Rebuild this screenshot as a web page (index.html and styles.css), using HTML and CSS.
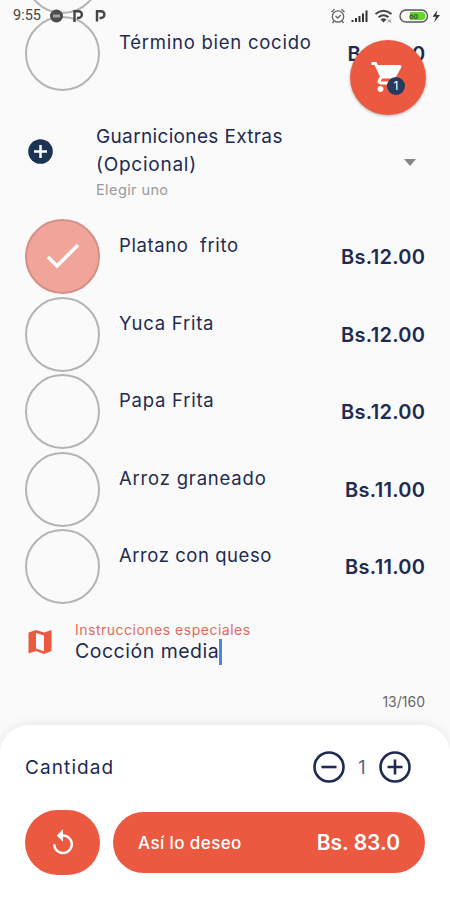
FILE: index.html
```html
<!DOCTYPE html>
<html lang="es">
<head>
<meta charset="utf-8">
<meta name="viewport" content="width=device-width">
<title>Guarniciones</title>
<link rel="stylesheet" href="styles.css">
</head>
<body>
<div class="screen">
  <div class="status">
    <span class="time">9:55</span>
    <svg class="notif" width="66" height="16" viewBox="0 0 66 16">
      <circle cx="8.500" cy="8" r="6.500" fill="#4c4c4c"/>
      <path d="M5 6.500h7v3H5z" fill="#a3a3a3"/>
      <path d="M26.500 14V3.200h4a3.300 3.300 0 0 1 0 6.800h-1.500" fill="none" stroke="#444" stroke-width="2.400"/>
      <path d="M49 13.500V3.200h4a3.300 3.300 0 0 1 0 6.800h-1.500" fill="none" stroke="#444" stroke-width="2.400"/>
    </svg>
    <svg class="system" width="112" height="16" viewBox="0 0 112 16">
      <g fill="none" stroke="#666" stroke-width="1.300">
        <circle cx="8" cy="8.500" r="5.700"/>
        <path d="M1.500 4L4.500 1.300M14.500 4L11.500 1.300M5.500 8l2.300 2 3-3M4 13l-1.500 2M12 13l1.500 2"/>
      </g>
      <path d="M21.500 12h2v2h-2zM25 10h2v4h-2zM28.500 8h2v6h-2zM32 5.500h2V14h-2zM35.500 2.500h2V14h-2z" fill="#333"/>
      <g fill="none" stroke="#444" stroke-width="2">
        <path d="M45.500 6q8-6.500 16 0M48.500 9.200q5-4 10 0"/>
      </g>
      <path d="M50.500 11.500q3-2.300 6 0l-3 3z" fill="#444"/>
      <path d="M58 11.500l3 3M61 11.500l-3 3" stroke="#777"/>
      <rect x="70" y="2" width="27.500" height="12" rx="6" fill="#fafafa" stroke="#555" stroke-width="1.400"/>
      <path d="M80 4h11.500a4 4 0 0 1 0 8H80z" fill="#67d52b"/>
      <text x="79" y="11.300" class="charge">60</text>
      <path d="M107.500 2l-5 6.800h3.500l-2 5.700 6-7.500h-3.700z" fill="#333"/>
    </svg>
  </div>

  <main class="content">
    <div class="option"><span class="ring"></span></div>
    <div class="option"><span class="ring"></span><span class="name n0">Término bien cocido</span><b class="price covered">Bs.11.00</b></div>

    <section class="group">
      <svg class="plus" width="26" height="26" viewBox="0 0 26 26"><circle cx="13.500" cy="12.500" r="12.300" fill="#1d3354"/><path d="M13.500 6v13M7 12.500h13" stroke="#fff" stroke-width="2.500"/></svg>
      <div class="heading">
        <div class="title"><span class="t1">Guarniciones Extras</span><br><span class="t2">(Opcional)</span></div>
        <div class="hint">Elegir uno</div>
      </div>
      <svg class="caret" width="12" height="7" viewBox="0 0 12 7"><path d="M0 0h12L6 7z" fill="#858585"/></svg>
    </section>

    <div class="option"><span class="ring on"><svg width="34" height="27" viewBox="0 0 34 27"><path d="M2 14l9 9L32 2" fill="none" stroke="#fff" stroke-width="3.600"/></svg></span><span class="name n1">Platano&nbsp; frito</span><b class="price">Bs.12.00</b></div>
    <div class="option"><span class="ring"></span><span class="name n2">Yuca Frita</span><b class="price">Bs.12.00</b></div>
    <div class="option"><span class="ring"></span><span class="name n3">Papa Frita</span><b class="price">Bs.12.00</b></div>
    <div class="option"><span class="ring"></span><span class="name n4">Arroz graneado</span><b class="price">Bs.11.00</b></div>
    <div class="option"><span class="ring"></span><span class="name n5">Arroz con queso</span><b class="price">Bs.11.00</b></div>

    <section class="notes">
      <svg class="map" width="24" height="24" viewBox="0 0 24 24"><path d="M.500 2.500L8 0l8 2.500L23.500 0v21L16 24l-8-3-7.500 2.500zM8 3v15.500l8 2.800V5.500z" fill="#eb5941" fill-rule="evenodd"/></svg>
      <div class="field">
        <div class="label">Instrucciones especiales</div>
        <div class="value"><span>Cocción media</span><i class="cursor"></i></div>
        <div class="count">13/160</div>
      </div>
    </section>
  </main>

  <footer class="sheet">
    <div class="quantity">
      <span class="qlabel">Cantidad</span>
      <svg width="32" height="32" viewBox="0 0 32 32"><circle cx="16" cy="16" r="14.500"/><path d="M8.500 16h15"/></svg>
      <span class="amount">1</span>
      <svg width="32" height="32" viewBox="0 0 32 32"><circle cx="16" cy="16" r="14.500"/><path d="M8.500 16h15M16 8.500v15"/></svg>
    </div>
    <div class="actions">
      <div class="reset"><svg width="30" height="30" viewBox="0 0 24 24"><path d="M12 5V1L7 6l5 5V7c3.310 0 6 2.690 6 6s-2.690 6-6 6-6-2.690-6-6H4c0 4.420 3.580 8 8 8s8-3.580 8-8-3.580-8-8-8z" fill="#fff"/></svg></div>
      <div class="confirm"><span class="wish">Así lo deseo</span><b class="total">Bs. 83.0</b></div>
    </div>
  </footer>

  <div class="cart">
    <svg width="36" height="36" viewBox="0 0 24 24"><path d="M7 18c-1.100 0-1.990.9-1.990 2S5.900 22 7 22s2-.9 2-2-.9-2-2-2zM1 2v2h2l3.600 7.590-1.350 2.450C4.520 15.370 5.480 17 7 17h12v-2H7.420c-.14 0-.25-.11-.25-.25l.93-1.750h7.450c.75 0 1.410-.41 1.750-1.030l3.580-6.490A1 1 0 0 0 20 4H5.210l-.94-2z" fill="#fff"/></svg>
    <span class="badge">1</span>
  </div>
</div>
</body>
</html>
```

FILE: styles.css
```css
* { box-sizing: border-box; }
body { margin: 0; background: #fafafa; font-family: Inter, "Open Sans", sans-serif; color: #1e2b50; }
.screen { position: relative; width: 450px; height: 900px; overflow: hidden; display: flex; flex-direction: column; background: #fafafa; }
.status { position: absolute; z-index: 3; top: 7px; left: 13px; right: 8px; height: 17px; display: flex; align-items: center; }
.time { width: 35px; font: 14.5px/17px Roboto, sans-serif; color: #444; white-space: nowrap; }
.system { margin-left: auto; }
.charge { font: bold 8px Roboto, sans-serif; fill: #3b5a30; }
.content { height: 725px; flex: none; overflow: hidden; display: flex; flex-direction: column; }
.content > * { flex: none; }
.option { height: 77.5px; padding: 0 25px; display: flex; align-items: center; }
.option:first-child { margin-top: -62.25px; }
.ring { width: 75px; height: 75px; flex: none; margin-bottom: 1px; border: 2px solid #b4b4b4; border-radius: 50%; display: flex; align-items: center; justify-content: center; }
.ring.on { background: #f0a49a; border-color: #d58f87; }
.name { margin: -24px auto 0 19px; font-size: 18.5px; line-height: 24px; white-space: nowrap; letter-spacing: .75px; }
.n1 { letter-spacing: .6px; }
.n4 { letter-spacing: .8px; }
.n5 { letter-spacing: .55px; }
.price { margin-right: -.3px; font-size: 20px; font-weight: 600; line-height: 26px; white-space: nowrap; letter-spacing: .3px; }
.covered { letter-spacing: 0; }
.group { height: 125.5px; padding: 30px 34px 0 27px; display: flex; }
.plus { margin-top: 16px; }
.heading { margin-left: 43px; }
.title { font-size: 19px; line-height: 28.5px; white-space: nowrap; }
.t1 { letter-spacing: .35px; }
.t2 { letter-spacing: .75px; }
.hint { font-size: 14.5px; line-height: 20px; color: #9b9b9b; letter-spacing: .4px; }
.caret { margin: 36px 0 0 auto; }
.notes { height: 119.5px; padding: 15px 25px 0 28px; display: flex; }
.map { margin-top: 9px; }
.field { flex: 1; margin-left: 23px; }
.label { font-size: 14px; line-height: 18px; color: #e6695a; white-space: nowrap; letter-spacing: .5px; }
.value { display: flex; align-items: center; height: 26px; font-size: 19.5px; white-space: nowrap; letter-spacing: .5px; }
.value span { margin-top: -2px; }
.cursor { width: 2.5px; height: 26px; background: #4c86df; }
.count { margin-top: 28px; line-height: 18px; text-align: right; font-size: 14px; color: #666; }
.sheet { position: relative; height: 175px; background: #fff; border-radius: 28px 28px 0 0; box-shadow: 0 -2px 10px rgba(0,0,0,.07); padding: 26px 25px 0; }
.quantity { height: 32px; display: flex; align-items: center; padding-right: 14px; }
.quantity svg { fill: none; stroke: #1e2b50; stroke-width: 2.6; }
.qlabel { margin-right: auto; font-size: 19px; letter-spacing: 1.1px; }
.amount { width: 34px; text-align: center; font-size: 18px; color: #555f78; }
.actions { margin-top: 27px; display: flex; align-items: center; gap: 13px; }
.reset { width: 75px; height: 65px; border-radius: 33px; background: #eb5941; display: flex; align-items: center; justify-content: center; }
.confirm { width: 312px; height: 61px; border-radius: 31px; background: #eb5941; color: #fff; display: flex; align-items: center; justify-content: space-between; padding: 0 25px; white-space: nowrap; }
.wish { font-size: 17px; font-weight: 500; letter-spacing: .4px; }
.total { font-size: 21px; font-weight: 600; }
.cart { position: absolute; z-index: 2; left: 350px; top: 40px; width: 76px; height: 75px; border-radius: 50%; background: #eb5941; box-shadow: 0 1px 3px rgba(0,0,0,.3); padding: 19px 0 0 20px; }
.badge { position: absolute; left: 37px; top: 37px; width: 18px; height: 18px; border-radius: 50%; background: #263a5d; color: #fff; font-size: 12px; line-height: 18px; text-align: center; }
```
